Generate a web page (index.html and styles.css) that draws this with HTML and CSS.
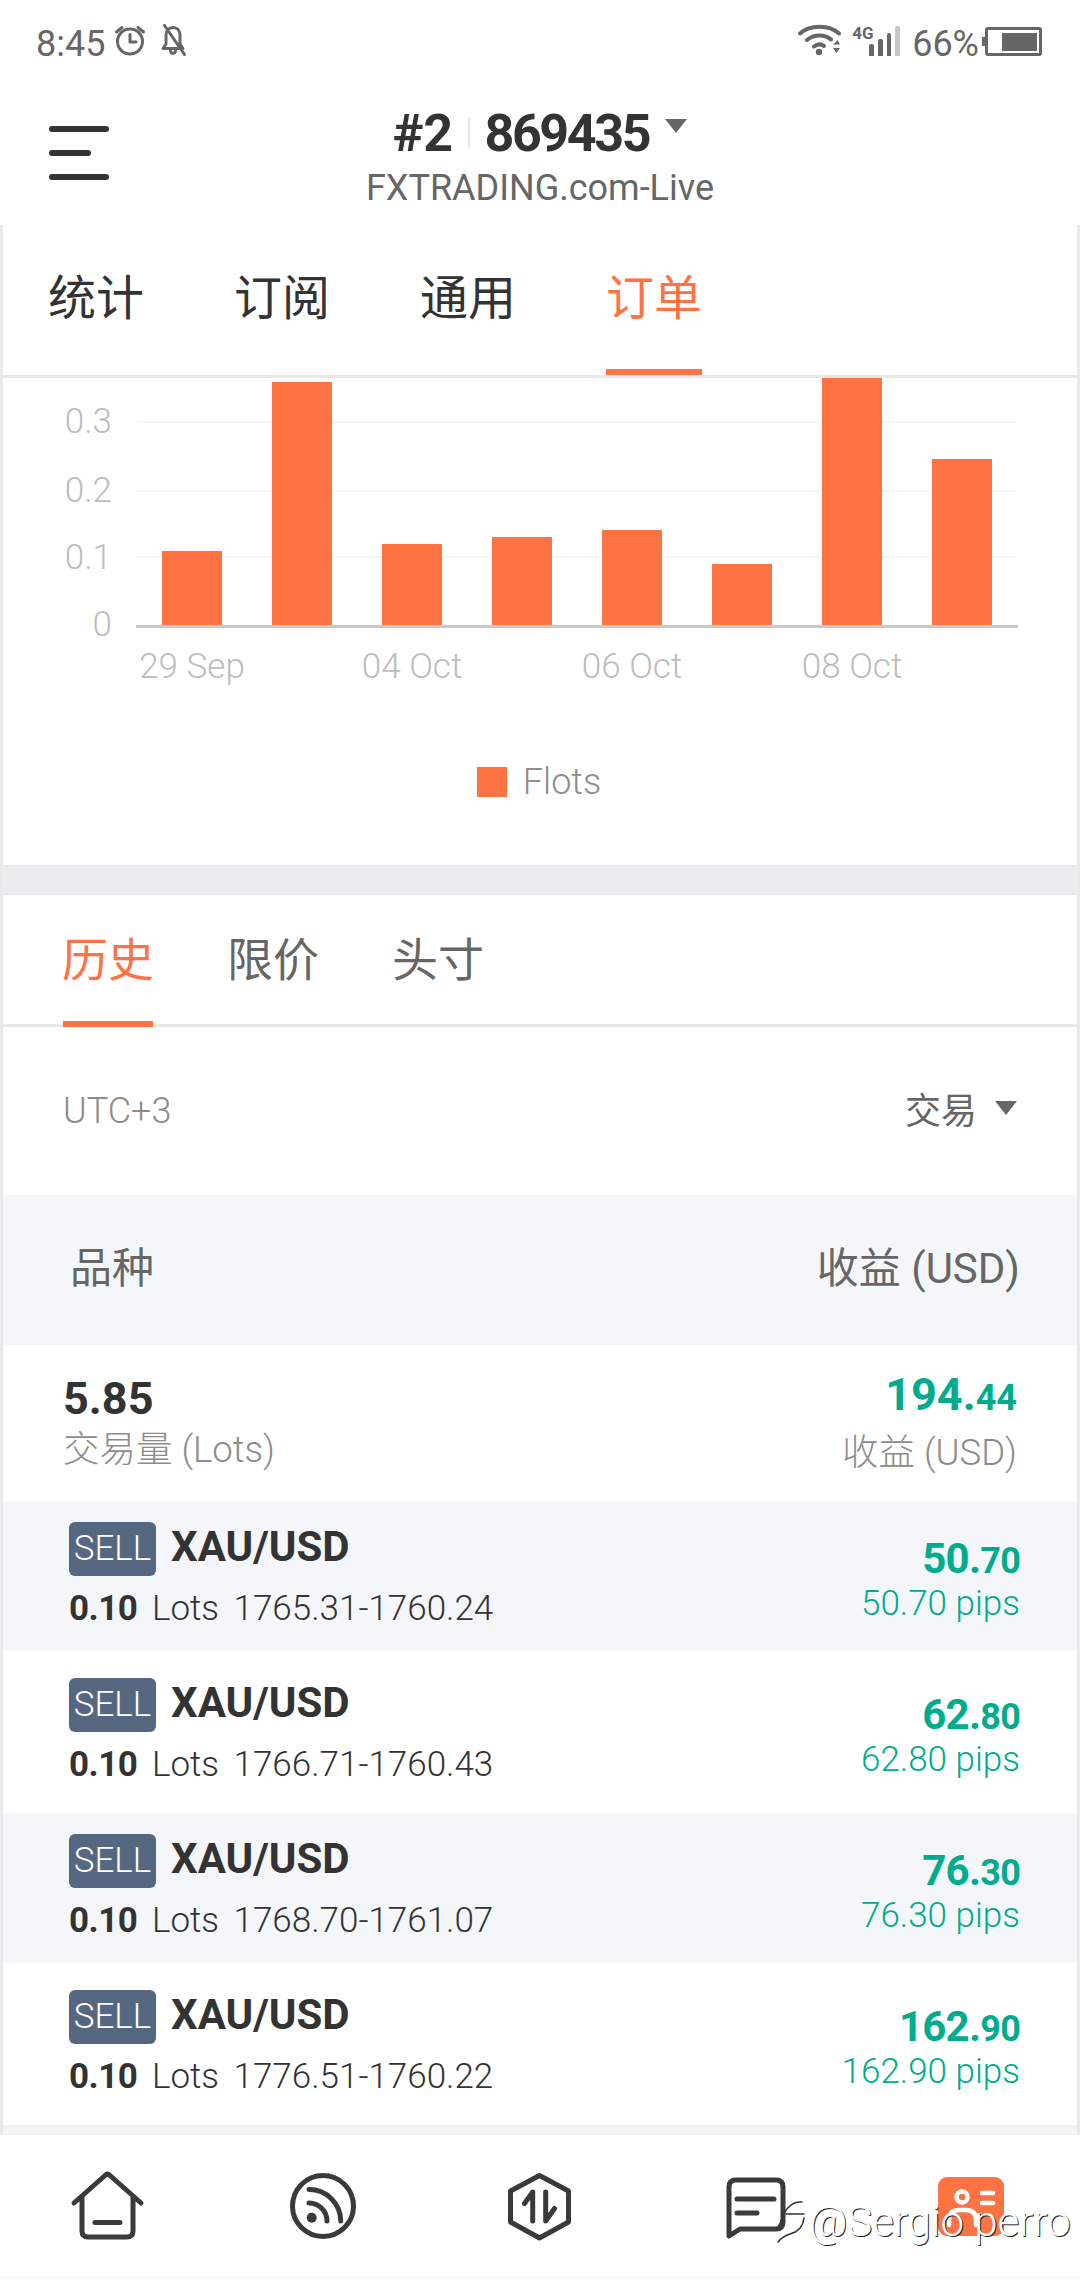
FILE: index.html
```html
<!DOCTYPE html>
<html lang="zh-CN">
<head>
    <meta charset="UTF-8">
    <meta name="viewport" content="width=device-width, initial-scale=1.0">
    <title>FXTRADING.com-Live</title>
    <link rel="stylesheet" href="styles.css">
</head>
<body>
    <div class="status-bar">
        <div class="status-left">
            <span class="status-text">8:45</span>
            <svg class="ico-alarm" width="32" height="32" viewBox="0 0 32 32">
                <circle cx="16" cy="17.5" r="12.5"/>
                <path d="M16 10.5V18H22M2.5 8L8 3.5M29.5 8L24 3.5"/>
            </svg>
            <svg class="ico-bell" width="26" height="32" viewBox="0 0 26 32">
                <path d="M2 24.5H22L19 20V11C19 6.500 16 3.500 12 3.500C8 3.500 5 6.500 5 11V20ZM9.500 27C10 30 14 30 14.500 27M3.500 1.500L23.500 30.500"/>
            </svg>
        </div>
        <div class="status-right">
            <svg class="ico-wifi" width="44" height="32" viewBox="0 0 44 32">
                <path d="M2 9.500C12 0.500 31 0.500 41 9.500M9 16C16 10 27 10 33 15.500M16 22.500C19 20 23 20 26 22"/>
                <circle cx="21" cy="28" r="3.200"/>
                <path class="ico-fill" d="M35 20.500L39.500 16L42 20.500ZM35 24H42L38.500 29Z"/>
            </svg>
            <div class="signal">
                <span class="signal-label">4G</span>
                <span class="signal-bar bar-a"></span>
                <span class="signal-bar bar-b"></span>
                <span class="signal-bar bar-c"></span>
                <span class="signal-bar bar-d"></span>
            </div>
            <span class="status-text battery-text">66%</span>
            <div class="battery">
                <span class="battery-nub"></span>
                <span class="battery-body"><span class="battery-level"></span></span>
            </div>
        </div>
    </div>

    <header class="app-header">
        <div class="menu-btn">
            <span class="menu-line"></span>
            <span class="menu-line menu-line-short"></span>
            <span class="menu-line"></span>
        </div>
        <div class="account">
            <div class="account-title">
                <span class="account-no">#2</span>
                <span class="account-sep"></span>
                <span>869435</span>
                <span class="caret caret-big"></span>
            </div>
            <div class="account-name">FXTRADING.com-Live</div>
        </div>
    </header>

    <main class="content">
        <nav class="main-tabs">
            <div class="main-tab">统计</div>
            <div class="main-tab">订阅</div>
            <div class="main-tab">通用</div>
            <div class="main-tab active">订单</div>
        </nav>

        <section class="chart">
            <svg class="chart-svg" width="1074" height="340" viewBox="3 0 1074 340">
                <line class="grid" x1="137" y1="44" x2="1017" y2="44"/>
                <line class="grid" x1="137" y1="113" x2="1017" y2="113"/>
                <line class="grid" x1="137" y1="179" x2="1017" y2="179"/>
                <text class="y-label" x="112" y="55">0.3</text>
                <text class="y-label" x="112" y="124">0.2</text>
                <text class="y-label" x="112" y="191">0.1</text>
                <text class="y-label" x="112" y="258">0</text>
                <rect class="bar" x="162" y="173" width="60" height="74"/>
                <rect class="bar" x="272" y="4" width="60" height="243"/>
                <rect class="bar" x="382" y="166" width="60" height="81"/>
                <rect class="bar" x="492" y="159" width="60" height="88"/>
                <rect class="bar" x="602" y="152" width="60" height="95"/>
                <rect class="bar" x="712" y="186" width="60" height="61"/>
                <rect class="bar" x="822" y="0" width="60" height="247"/>
                <rect class="bar" x="932" y="81" width="60" height="166"/>
                <line class="axis" x1="136" y1="248.500" x2="1018" y2="248.500"/>
                <text class="x-label" x="192" y="300">29 Sep</text>
                <text class="x-label" x="412" y="300">04 Oct</text>
                <text class="x-label" x="632" y="300">06 Oct</text>
                <text class="x-label" x="852" y="300">08 Oct</text>
            </svg>
            <div class="legend">
                <span class="legend-box"></span>
                <span class="legend-text">Flots</span>
            </div>
        </section>

        <div class="band"></div>

        <nav class="sub-tabs">
            <div class="sub-tab active">历史</div>
            <div class="sub-tab">限价</div>
            <div class="sub-tab">头寸</div>
        </nav>

        <div class="filter-row">
            <span class="utc">UTC+3</span>
            <span class="filter-type">交易<span class="caret"></span></span>
        </div>

        <div class="table-head">
            <span>品种</span>
            <span>收益 (USD)</span>
        </div>

        <div class="summary">
            <div>
                <div class="summary-value">5.85</div>
                <div class="summary-label">交易量 (Lots)</div>
            </div>
            <div class="align-right">
                <div class="summary-profit">194.<small>44</small></div>
                <div class="summary-label">收益 (USD)</div>
            </div>
        </div>

        <div class="trade shaded">
            <div>
                <div class="trade-top"><span class="badge">SELL</span><span class="symbol">XAU/USD</span></div>
                <div class="trade-info"><b>0.10</b> Lots 1765.31-1760.24</div>
            </div>
            <div class="align-right">
                <div class="trade-profit">50.<small>70</small></div>
                <div class="trade-pips">50.70 pips</div>
            </div>
        </div>
        <div class="trade">
            <div>
                <div class="trade-top"><span class="badge">SELL</span><span class="symbol">XAU/USD</span></div>
                <div class="trade-info"><b>0.10</b> Lots 1766.71-1760.43</div>
            </div>
            <div class="align-right">
                <div class="trade-profit">62.<small>80</small></div>
                <div class="trade-pips">62.80 pips</div>
            </div>
        </div>
        <div class="trade shaded">
            <div>
                <div class="trade-top"><span class="badge">SELL</span><span class="symbol">XAU/USD</span></div>
                <div class="trade-info"><b>0.10</b> Lots 1768.70-1761.07</div>
            </div>
            <div class="align-right">
                <div class="trade-profit">76.<small>30</small></div>
                <div class="trade-pips">76.30 pips</div>
            </div>
        </div>
        <div class="trade">
            <div>
                <div class="trade-top"><span class="badge">SELL</span><span class="symbol">XAU/USD</span></div>
                <div class="trade-info"><b>0.10</b> Lots 1776.51-1760.22</div>
            </div>
            <div class="align-right">
                <div class="trade-profit">162.<small>90</small></div>
                <div class="trade-pips">162.90 pips</div>
            </div>
        </div>
        <div class="list-end"></div>
    </main>

    <footer class="tabbar">
        <svg class="tab-ico" width="80" height="80" viewBox="0 0 80 80">
            <path d="M6 37L37 9.500Q39.500 7 42 9.500L73 37M14 31V65Q14 71 20 71H59Q65 71 65 65V31M27 56.500H52"/>
        </svg>
        <svg class="tab-ico" width="80" height="80" viewBox="0 0 80 80">
            <circle cx="39" cy="40" r="30.500"/>
            <path d="M25 37A18 18 0 0 1 43 55M25 23.500A31.500 31.500 0 0 1 56.700 55"/>
            <circle class="ico-dot" cx="27.700" cy="51.700" r="5"/>
        </svg>
        <svg class="tab-ico" width="80" height="80" viewBox="0 0 80 80">
            <path d="M39.500 9.500L68.500 25V56L39.500 72L10.500 56V25ZM32.700 55V26L24.500 37.500M45.700 26V55L54.500 42.500"/>
        </svg>
        <svg class="tab-ico" width="80" height="80" viewBox="0 0 80 80">
            <path d="M13 70V21Q13 14 20 14H60Q67 14 67 21V56Q67 63 60 63H24ZM21 33H58M21 47H41"/>
        </svg>
        <svg class="tab-ico" width="80" height="80" viewBox="0 0 80 80">
            <rect class="profile-bg" x="6" y="11" width="66" height="59" rx="9"/>
            <circle class="profile-line" cx="30" cy="31" r="5.500"/>
            <path class="profile-line" d="M17 59V54Q17 44 27 44H34Q44 44 44 54V59M50 27H61M50 37H61"/>
        </svg>
    </footer>
    <div class="bottom-strip"></div>

    <div class="watermark">
        <svg class="watermark-logo" width="34" height="44" viewBox="0 0 34 44">
            <path d="M30 2C20 1 14 8 10 18C8 24 7 27 4 30M14 14H32M32 18C31 26 26 32 18 34C12 36 9 38 6 42"/>
        </svg>
        <span class="watermark-text">@Sergio perro</span>
    </div>
</body>
</html>
```

FILE: styles.css
```css
* {
    box-sizing: border-box;
}
html, body {
    margin: 0;
    padding: 0;
}
body {
    position: relative;
    width: 1080px;
    height: 2280px;
    overflow: hidden;
    background: #fff;
    color: #333;
    font-family: Roboto, "Noto Sans CJK SC", sans-serif;
}

/* status bar */
.status-bar {
    display: flex;
    justify-content: space-between;
    align-items: flex-start;
    height: 60px;
    padding: 24px 38px 0 36px;
}
.status-left, .status-right {
    display: flex;
    align-items: center;
    height: 32px;
}
.status-text {
    font-size: 36px;
    line-height: 36px;
    color: #666;
    margin-top: 8px;
}
.ico-alarm {
    margin-left: 9px;
}
.ico-alarm circle, .ico-alarm path, .ico-bell path {
    fill: none;
    stroke: #666;
    stroke-width: 3;
    stroke-linecap: round;
    stroke-linejoin: round;
}
.ico-bell {
    margin-left: 15px;
}
.ico-wifi {
    margin-right: -2px;
}
.ico-wifi path {
    fill: none;
    stroke: #666;
    stroke-width: 4;
    stroke-linecap: round;
}
.ico-wifi circle, .ico-wifi .ico-fill {
    fill: #666;
    stroke: none;
}
.signal {
    display: flex;
    align-items: flex-end;
    position: relative;
    gap: 4px;
    width: 48px;
    height: 30px;
    margin-left: 12px;
    padding-left: 17px;
    margin-top: 1px;
}
.signal-label {
    position: absolute;
    left: 0;
    top: 0;
    font-size: 17px;
    line-height: 15px;
    font-weight: 700;
    color: #666;
}
.signal-bar {
    width: 5px;
    background: #666;
    border-radius: 2px 2px 0 0;
}
.bar-a { height: 12px; }
.bar-b { height: 17px; }
.bar-c { height: 23px; }
.bar-d { height: 30px; background: #c6c6c6; }
.battery-text {
    margin-left: 12px;
}
.battery {
    display: flex;
    align-items: center;
    margin-left: 3px;
    margin-top: 3px;
}
.battery-nub {
    width: 3px;
    height: 9px;
    background: #666;
}
.battery-body {
    display: flex;
    justify-content: flex-end;
    align-items: center;
    width: 57px;
    height: 29px;
    padding-right: 2px;
    border: 3px solid #666;
    border-radius: 3px;
}
.battery-level {
    width: 35px;
    height: 18px;
    background: #666;
}

/* header */
.app-header {
    display: grid;
    grid-template-columns: 1fr auto 1fr;
    height: 165px;
}
.menu-btn {
    display: flex;
    flex-direction: column;
    gap: 18px;
    padding: 66px 0 0 49px;
}
.menu-line {
    display: block;
    width: 60px;
    height: 6px;
    border-radius: 3px;
    background: #333;
}
.menu-line-short {
    width: 42px;
}
.account {
    text-align: center;
}
.account-title {
    display: flex;
    align-items: center;
    justify-content: center;
    height: 58px;
    margin-top: 44px;
    font-size: 52px;
    font-weight: 700;
    letter-spacing: -2.400px;
    color: #333;
}
.account-no {
    letter-spacing: -0.500px;
}
.account-sep {
    width: 2px;
    height: 30px;
    margin: 0 15px;
    background: #e6e6e6;
}
.caret {
    display: inline-block;
    width: 0;
    height: 0;
    border-left: 11px solid transparent;
    border-right: 11px solid transparent;
    border-top: 14px solid #666;
}
.caret-big {
    margin: -14px 0 0 16px;
}
.account-name {
    margin-top: 6px;
    font-size: 36px;
    line-height: 40px;
    color: #666;
}

/* main */
.content {
    height: 1910px;
    border-left: 3px solid #e9e9e9;
    border-right: 3px solid #e9e9e9;
}
.main-tabs {
    display: flex;
    gap: 90px;
    height: 153px;
    padding-left: 45px;
    border-bottom: 3px solid #e8e8e8;
}
.main-tab {
    width: 96px;
    height: 150px;
    padding-top: 40px;
    text-align: center;
    font-size: 48px;
    line-height: 68px;
    color: #333;
}
.main-tab.active {
    color: #ff7241;
    border-bottom: 6px solid #ff7241;
}

/* chart */
.chart {
    height: 487px;
}
.chart-svg {
    display: block;
}
.grid {
    stroke: #f5f5f5;
    stroke-width: 2;
}
.axis {
    stroke: #c8c8c8;
    stroke-width: 3;
}
.bar {
    fill: #ff7241;
}
.y-label, .x-label {
    font-size: 35px;
    font-weight: 300;
    fill: #bdbdbd;
}
.y-label {
    text-anchor: end;
}
.x-label {
    text-anchor: middle;
}
.legend {
    display: flex;
    justify-content: center;
    align-items: center;
    gap: 16px;
    margin-top: 46px;
    padding-right: 2px;
}
.legend-box {
    width: 30px;
    height: 30px;
    background: #ff7241;
}
.legend-text {
    font-size: 36px;
    line-height: 36px;
    font-weight: 300;
    color: #8e8e8e;
}
.band {
    height: 30px;
    background: #ebecee;
}

/* order tabs */
.sub-tabs {
    display: flex;
    gap: 75px;
    height: 132px;
    padding-left: 60px;
    border-bottom: 3px solid #e8e8e8;
}
.sub-tab {
    display: flex;
    justify-content: center;
    flex-shrink: 0;
    width: 90px;
    height: 132px;
    padding-top: 32px;
    white-space: nowrap;
    font-size: 46px;
    line-height: 66px;
    color: #666;
}
.sub-tab.active {
    color: #ff7241;
    border-bottom: 6px solid #ff7241;
}
.filter-row {
    display: flex;
    justify-content: space-between;
    align-items: center;
    height: 168px;
    padding: 0 60px 6px;
}
.utc {
    margin-top: 6px;
    font-size: 36px;
    font-weight: 300;
    color: #8c8c8c;
}
.filter-type {
    display: flex;
    align-items: center;
    gap: 18px;
    font-size: 36px;
    color: #666;
}
.filter-type .caret {
    border-left-width: 11.500px;
    border-right-width: 11.500px;
}

/* table */
.table-head {
    display: flex;
    justify-content: space-between;
    align-items: center;
    height: 150px;
    padding: 0 57px 12px 67px;
    background: #f4f6f9;
    font-size: 42px;
    color: #666;
}
.summary {
    display: flex;
    justify-content: space-between;
    height: 156px;
    padding: 29px 60px 0 60px;
}
.align-right {
    text-align: right;
}
.summary-value, .summary-profit {
    font-size: 45px;
    line-height: 50px;
    font-weight: 700;
}
.summary-profit {
    color: #00ab8e;
    margin-top: -4px;
}
.summary-profit small {
    font-size: 36px;
}
.summary-label {
    margin-top: 3px;
    font-size: 36.500px;
    line-height: 46px;
    font-weight: 300;
    color: #8c8c8c;
}
.align-right .summary-label {
    margin-top: 7px;
}
.trade {
    display: flex;
    justify-content: space-between;
    height: 150px;
    margin-bottom: 6px;
    padding: 21px 57px 0 66px;
}
.trade.shaded {
    background: #f4f6f9;
}
.trade-top {
    display: flex;
    align-items: center;
    gap: 15px;
}
.badge {
    width: 87px;
    height: 54px;
    border-radius: 6px;
    background: #566781;
    color: #fff;
    text-align: center;
    font-size: 35px;
    line-height: 54px;
    font-weight: 300;
}
.symbol {
    font-size: 42px;
    line-height: 48px;
    font-weight: 700;
    margin-top: -5px;
    color: #333;
}
.trade-info {
    margin-top: 12px;
    font-size: 35px;
    line-height: 42px;
    font-weight: 300;
    word-spacing: 6px;
    white-space: nowrap;
    color: #333;
}
.trade-info b {
    font-weight: 700;
    letter-spacing: -0.500px;
}
.trade-profit {
    margin-top: 14px;
    font-size: 42px;
    line-height: 46px;
    font-weight: 700;
    letter-spacing: -0.800px;
    color: #00ab8e;
}
.trade-profit small {
    font-size: 36px;
}
.trade-pips {
    margin-top: -1px;
    font-size: 35px;
    line-height: 42px;
    font-weight: 300;
    color: #00ab8e;
}
.list-end {
    height: 10px;
    background: #f4f4f4;
}

/* bottom nav */
.tabbar {
    display: grid;
    grid-template-columns: repeat(5, 216px);
    justify-items: center;
    align-items: center;
    height: 141px;
}
.tab-ico path, .tab-ico circle {
    fill: none;
    stroke: #3a3a3a;
    stroke-width: 5;
    stroke-linecap: round;
    stroke-linejoin: round;
}
.tab-ico .ico-dot {
    fill: #3a3a3a;
    stroke: none;
}
.profile-bg {
    fill: #ff7241;
}
.tab-ico .profile-line {
    stroke: #fff;
    stroke-width: 4.500;
}
.bottom-strip {
    height: 4px;
    background: #fafafa;
}

/* watermark sits over the bottom nav */
.watermark {
    position: absolute;
    left: 772px;
    top: 2200px;
    display: flex;
    align-items: flex-start;
    gap: 3px;
}
.watermark-logo path {
    fill: none;
    stroke: #333;
    stroke-width: 1.500;
    stroke-linecap: round;
}
.watermark-text {
    font-size: 42px;
    line-height: 44px;
    font-weight: 300;
    color: #fff;
    text-shadow: 1px 1px 0 #222;
    white-space: nowrap;
}
```
